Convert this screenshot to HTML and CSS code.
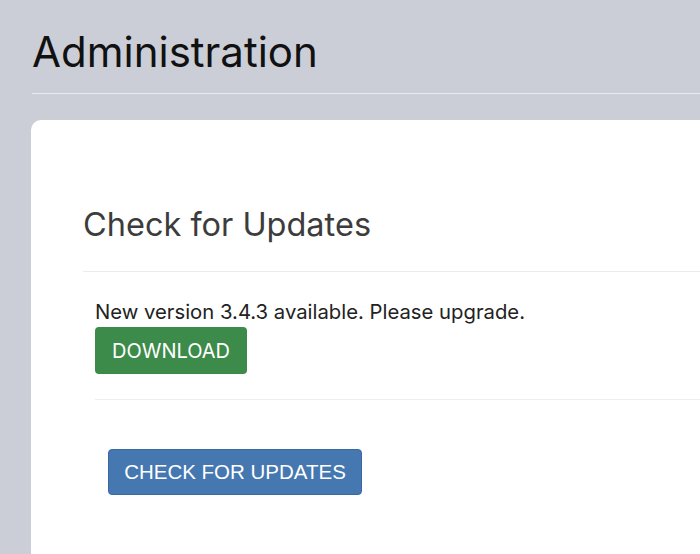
FILE: index.html
```html
<!DOCTYPE html>
<html lang="en">
<head>
  <meta charset="UTF-8">
  <title>Administration</title>
  <link rel="stylesheet" href="styles.css">
</head>
<body>

<div class="page">
  <h1 class="page-title">Administration</h1>

  <div class="card">
    <h2 class="card-title">Check for Updates</h2>

    <div class="update-box">
      <div class="update-msg">New version 3.4.3 available. Please upgrade.</div>
      <button class="btn btn-green">DOWNLOAD</button>
    </div>

    <div class="check-row">
      <button class="btn btn-blue">CHECK FOR UPDATES</button>
    </div>
  </div>
</div>

</body>
</html>
```

FILE: styles.css
```css
html, body {
  margin: 0;
  padding: 0;
  height: 100%;
  background-color: #cbced6;
  font-family: Inter, "Liberation Sans", sans-serif;
  overflow: hidden;
}

.page {
  box-sizing: border-box;
  height: 100%;
  display: flex;
  flex-direction: column;
  padding: 25px 0 0 31px;
}

.page-title {
  font-size: 42px;
  font-weight: 400;
  color: #111;
  margin: 0 0 0 1px;
  padding-bottom: 14px;
  border-bottom: 1px solid #e9eaee;
  line-height: 54px;
}

.card {
  flex: 1;
  margin-top: 26px;
  background: #fff;
  border-radius: 10px 0 0 0;
  padding: 85px 0 0 52px;
}

.card-title {
  font-size: 32.5px;
  font-weight: 400;
  color: #3c3c3c;
  margin: 0;
  line-height: 40px;
  padding-bottom: 26px;
  border-bottom: 1px solid #ececec;
}

.update-box {
  margin-left: 12px;
  padding: 28px 0 25px;
  border-bottom: 1px solid #eeeeee;
}

.update-msg {
  font-size: 20.3px;
  color: #222;
  line-height: 24px;
  margin-bottom: 3px;
}

.btn {
  border: none;
  border-radius: 4px;
  color: #fff;
  cursor: pointer;
  padding: 0;
}

.btn-green {
  background-color: #3d8b4a;
  font-family: Inter, "Liberation Sans", sans-serif;
  font-size: 20px;
  width: 152px;
  height: 47px;
}

.check-row {
  padding: 49px 0 0 25px;
}

.btn-blue {
  background-color: #4577b0;
  border: 1px solid #3a68a0;
  font-family: "Liberation Sans", Arial, sans-serif;
  font-size: 20.5px;
  width: 254px;
  height: 46px;
}
```
